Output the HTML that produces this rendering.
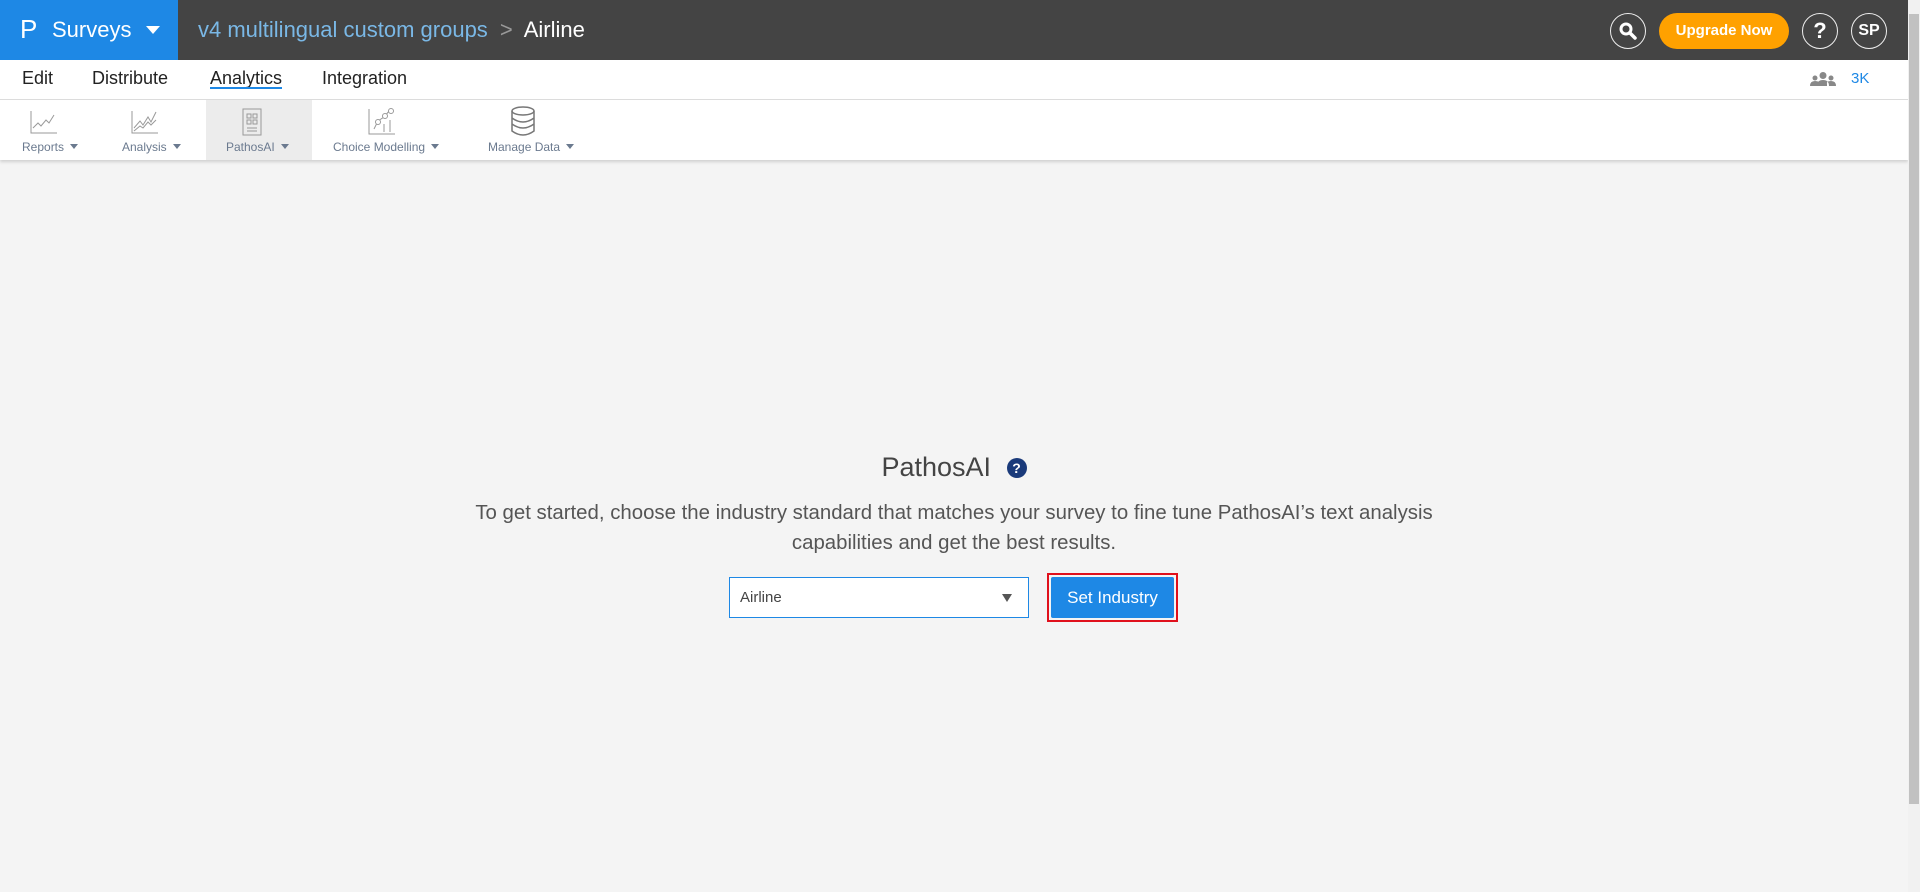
<!DOCTYPE html>
<html><head><meta charset="utf-8"><style>
*{margin:0;padding:0;box-sizing:border-box}
body{width:1920px;height:892px;overflow:hidden;background:#f4f4f4;font-family:"Liberation Sans",sans-serif;position:relative}
.top{position:absolute;left:0;top:0;width:1908px;height:60px;background:#444}
.brand{position:absolute;left:0;top:0;width:178px;height:60px;background:#1e88e5;color:#fff;font-size:22px}
.abs{position:absolute}
.nav{position:absolute;left:0;top:60px;width:1908px;height:40px;background:#fff;border-bottom:1px solid #ddd}
.nav span{position:absolute;top:8px;font-size:18px;color:#222}
.tool{position:absolute;left:0;top:100px;width:1908px;height:60px;background:#fff;box-shadow:0 2px 3px rgba(0,0,0,.15)}
.lbl{position:absolute;top:40px;font-size:12px;color:#6b7a8f;white-space:nowrap}
.lbl:after{content:"";display:inline-block;margin-left:6px;border:4px solid transparent;border-top:5px solid #6b7a8f;vertical-align:-2px}
.circ{position:absolute;width:36px;height:36px;border:1.5px solid #eee;border-radius:50%;color:#fff;font-weight:bold;text-align:center;line-height:33px}
</style></head><body>
<div class="top">
 <div class="brand">
  <div class="abs" style="left:20px;top:14px;font-size:26px">P</div>
  <div class="abs" style="left:52px;top:17px">Surveys</div>
  <div class="abs" style="left:146px;top:26px;border:7px solid transparent;border-top:8px solid #fff;border-bottom:0"></div>
 </div>
 <div class="abs" style="left:198px;top:17px;font-size:22px;color:#7ab8e6">v4 multilingual custom groups <span style="color:#999;margin:0 6px">&gt;</span> <span style="color:#fff">Airline</span></div>
 <div class="circ" style="left:1610px;top:13px"><svg width="20" height="20" viewBox="0 0 20 20" style="margin-top:7px"><circle cx="8" cy="8" r="5" stroke="#fff" stroke-width="3" fill="none"/><path d="M12 12l5 5" stroke="#fff" stroke-width="3.5" stroke-linecap="round"/></svg></div>
 <div class="abs" style="left:1659px;top:13px;width:130px;height:36px;border-radius:18px;background:#ffa100;color:#fff;font-size:15px;font-weight:bold;text-align:center;line-height:36px">Upgrade Now</div>
 <div class="circ" style="left:1802px;top:13px;font-size:22px">?</div>
 <div class="circ" style="left:1851px;top:13px;font-size:16px">SP</div>
</div>
<div class="nav">
 <span style="left:22px">Edit</span><span style="left:92px">Distribute</span>
 <span style="left:210px">Analytics</span><span style="left:322px">Integration</span>
 <div class="abs" style="left:210px;top:27px;width:72px;height:2px;background:#1e88e5"></div>
 <svg class="abs" style="left:1810px;top:12px" width="26" height="14" viewBox="0 0 26 14"><circle cx="13" cy="3.5" r="3.5" fill="#888"/><circle cx="5" cy="6" r="2.5" fill="#888"/><circle cx="21" cy="6" r="2.5" fill="#888"/><path d="M7 14q0-6 6-6t6 6zM0 14q0-5 5-5t4 3v2zM26 14q0-5-5-5t-4 3v2z" fill="#888"/></svg>
 <span style="left:1851px;top:10px;font-size:15px;color:#1e88e5">3K</span>
</div>
<div class="tool">
 <div class="abs" style="left:206px;top:0;width:106px;height:60px;background:#ececec"></div>
 <svg class="abs" style="left:30px;top:10px" width="28" height="24"><path d="M1 1v22h26M3 18l5-5 3 3 5-6 3 3 5-8" stroke="#999" fill="none"/></svg>
 <svg class="abs" style="left:131px;top:10px" width="28" height="24"><path d="M1 1v22h26M3 18l6-7 3 4 5-8 3 5 5-10M3 21l6-5 3 2 5-6 3 3 5-5" stroke="#999" fill="none"/></svg>
 <svg class="abs" style="left:240px;top:7px" width="24" height="30"><rect x="3" y="2" width="18" height="26" stroke="#999" fill="none"/><rect x="7" y="7" width="4" height="4" stroke="#999" fill="none"/><rect x="13" y="7" width="4" height="4" stroke="#999" fill="none"/><rect x="7" y="13" width="4" height="4" stroke="#999" fill="none"/><rect x="13" y="13" width="4" height="4" stroke="#999" fill="none"/><path d="M7 21h10M7 24h10" stroke="#999"/></svg>
 <svg class="abs" style="left:368px;top:7px" width="28" height="28"><path d="M1 2v25h26M6 22l4-8 6-4 6-7" stroke="#999" fill="none"/><circle cx="10" cy="15" r="2.5" stroke="#999" fill="#fff"/><circle cx="17" cy="9" r="2.5" stroke="#999" fill="#fff"/><circle cx="23" cy="4" r="2.5" stroke="#999" fill="#fff"/><path d="M16 25v-8M22 25v-12" stroke="#999"/></svg>
 <svg class="abs" style="left:510px;top:6px" width="26" height="30"><ellipse cx="13" cy="5" rx="11" ry="4" stroke="#777" stroke-width="1.5" fill="none"/><path d="M2 5v20q11 8 22 0V5M2 12q11 8 22 0M2 18q11 8 22 0" stroke="#777" stroke-width="1.5" fill="none"/></svg>
 <div class="lbl" style="left:22px">Reports</div>
 <div class="lbl" style="left:122px">Analysis</div>
 <div class="lbl" style="left:226px">PathosAI</div>
 <div class="lbl" style="left:333px">Choice Modelling</div>
 <div class="lbl" style="left:488px">Manage Data</div>
</div>
<div class="abs" style="left:1908px;top:0;width:12px;height:892px;background:#f1f1f1"><div style="margin:14px 1px 0;height:790px;background:#c1c1c1"></div></div>
<div class="abs" style="left:0;top:452px;width:1908px;text-align:center;font-size:27px;color:#444">PathosAI <span style="display:inline-block;width:20px;height:20px;border-radius:50%;background:#1a3a7a;color:#fff;font-size:14px;font-weight:bold;line-height:20px;vertical-align:3px;margin-left:8px">?</span></div>
<div class="abs" style="left:444px;top:498px;width:1020px;text-align:center;font-size:20.4px;line-height:30px;color:#555">To get started, choose the industry standard that matches your survey to fine tune PathosAI’s text analysis capabilities and get the best results.</div>
<div class="abs" style="left:729px;top:577px;width:300px;height:41px;background:#fff;border:1px solid #1e88e5;font-size:15px;color:#444;padding:11px 10px">Airline<div class="abs" style="right:16px;top:16px;border:5px solid transparent;border-top:8px solid #555;border-bottom:0"></div></div>
<div class="abs" style="left:1047px;top:573px;width:131px;height:49px;border:2px solid #e0101c;padding:2px"><div style="background:#1e88e5;height:100%;color:#fff;font-size:17px;text-align:center;line-height:41px;border-radius:2px">Set Industry</div></div>
</body></html>
